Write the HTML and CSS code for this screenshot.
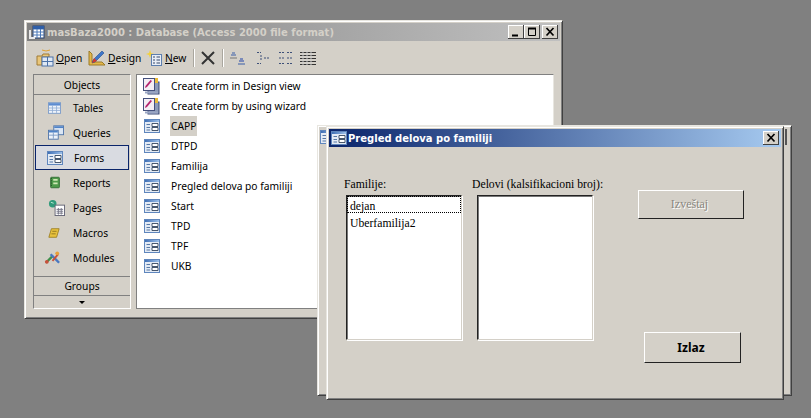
FILE: index.html
```html
<!DOCTYPE html>
<html lang="en">
<head>
	<meta charset="UTF-8">
	<title>masBaza2000</title>
	<link rel="stylesheet" href="styles.css">
</head>
<body>
	<svg class="defs" width="0" height="0">
		<defs>
			<linearGradient id="fbar" x1="0" y1="0" x2="1" y2="0"><stop offset="0" stop-color="#3f6fb5"/><stop offset="1" stop-color="#9cc0ea"/></linearGradient>
			<symbol id="form" viewBox="0 0 16 14">
				<rect x=".5" y=".5" width="15" height="13" fill="#e4ebf5" stroke="#5f86bd"/>
				<rect x="1" y="1" width="14" height="2" fill="url(#fbar)"/>
				<path d="M2.500 5.500h3.500M2.500 8.500h3.500M2.500 11h3.500" stroke="#5577a5" fill="none"/>
				<path d="M8 4.500h6v3h-6zM8 8.500h6v3h-6z" fill="#fff" stroke="#33465f" stroke-width=".9"/>
			</symbol>
			<symbol id="wiz" viewBox="0 0 18 18">
				<rect x="6" y="5" width="11" height="12" fill="#8c9ab8" stroke="#3f4d77"/>
				<rect x="9" y="1" width="7" height="5" fill="#e8b93a"/>
				<rect x="1.500" y="1.500" width="11" height="12" fill="#f4eef4" stroke="#44507c"/>
				<path d="M3 11l2-1 5-6-1.500-1-5 6z" fill="#b5246f"/>
				<path d="M3 15.500h13" stroke="#9aa6c4" stroke-width="2"/>
			</symbol>
		</defs>
	</svg>

	<div class="desktop">
		<!-- database window -->
		<div class="win db">
			<div class="title grey">
				<svg class="tico" width="16" height="16" viewBox="0 0 16 16"><rect x="4" y="2" width="11" height="12" fill="#fff" stroke="#27406f"/><path d="M4 5h11M8 2v12M11.500 2v12M4 8h11M4 11h11" stroke="#4a78b8"/><rect x="4" y="2" width="11" height="3" fill="#2f5fa8"/><path d="M1 6v8h5" fill="none" stroke="#e8e8e8" stroke-width="2"/></svg>
				<span class="ttext">masBaza2000 : Database (Access 2000 file format)</span>
				<div class="ctrls">
					<span class="cbtn"><svg width="14" height="12" viewBox="0 0 14 12"><path d="M3 9.500h6" stroke="#000" stroke-width="2"/></svg></span>
					<span class="cbtn"><svg width="14" height="12" viewBox="0 0 14 12"><path d="M3.500 2.500h7v7h-7z" fill="none" stroke="#000"/><path d="M3 2.500h8" stroke="#000" stroke-width="2"/></svg></span>
					<span class="cbtn gapl"><svg width="14" height="12" viewBox="0 0 14 12"><path d="M3.500 2l7 7.500M10.500 2l-7 7.500" stroke="#000" stroke-width="1.700"/></svg></span>
				</div>
			</div>

			<div class="toolbar">
				<span class="tool t-open">
					<svg width="18" height="18" viewBox="0 0 18 18"><path d="M1 7h5l1-2h6v3h-7v8h-5z" fill="#e9c67a" stroke="#a07a35"/><path d="M6 1l4 1 4-1" stroke="#e0a030" fill="none"/><rect x="6" y="8" width="11" height="9" fill="#dfe8f4" stroke="#4c72a8"/><path d="M11.500 8v9M6 12.500h11" stroke="#4c72a8"/></svg>
					<span><u>O</u>pen</span>
				</span>
				<span class="tool t-design">
					<svg width="18" height="18" viewBox="0 0 18 18"><path d="M1 2v14h16l-3-3H4V5z" fill="#e5b84a" stroke="#9a7a28"/><path d="M5 11l9-9 2 2-9 9-3 1z" fill="#3f76c9" stroke="#234c8c" stroke-width=".6"/><path d="M4 14l2-5 3 3z" fill="#d53a2a"/></svg>
					<span><u>D</u>esign</span>
				</span>
				<span class="tool t-new">
					<svg width="16" height="18" viewBox="0 0 16 18"><path d="M4 1l1 3 3 1-3 1-1 3-1-3-3-1 3-1z" fill="#f3d23c"/><rect x="5.500" y="5.500" width="10" height="11" fill="#e9eef6" stroke="#5d7fae"/><path d="M7 8h2M7 11h2M7 14h2M10.500 8h3.500M10.500 11h3.500M10.500 14h3.500" stroke="#35496a"/></svg>
					<span><u>N</u>ew</span>
				</span>
				<i class="sep"></i>
				<svg class="t-x" width="14" height="14" viewBox="0 0 14 14"><path d="M1 1l12 12M13 1L1 13" stroke="#333" stroke-width="2"/></svg>
				<i class="sep sep2"></i>
				<svg class="t-i1" width="15" height="14" viewBox="0 0 15 14"><path d="M2 2h3M1 4h5" stroke="#3a5fa8"/><path d="M0 7h7" stroke="#777"/><path d="M10 8h3M9 10h5" stroke="#2244aa"/><path d="M8 13h7" stroke="#3a5fa8"/></svg>
				<svg class="t-i2" width="15" height="14" viewBox="0 0 15 14" fill="none" stroke="#3c4f78" stroke-dasharray="2 1"><path d="M1 1.500h4M8 7h6M1 12.500h4M5 4v6"/></svg>
				<svg class="t-i3" width="16" height="14" viewBox="0 0 16 14" fill="none" stroke="#3c4f78" stroke-dasharray="2 1"><path d="M1 1.500h5M9 1.500h6M1 7h5M9 7h6M1 12.500h5M9 12.500h6"/></svg>
				<svg class="t-i4" width="16" height="14" viewBox="0 0 16 14"><path d="M0 1.500h16M0 4.500h16M0 7.500h16M0 10.500h16M0 13.500h16" stroke="#333"/><path d="M3 0v14M7 0v14M11 0v14" stroke="#ccc"/></svg>
			</div>

			<div class="body">
				<div class="bar">
					<div class="bar-head">Objects</div>
					<div class="bar-items">
						<div class="bitem"><svg width="13" height="12" viewBox="0 0 16 14"><rect x=".5" y=".5" width="15" height="13" fill="#eef3fa" stroke="#6f93c6"/><rect x="1" y="1" width="14" height="3" fill="#5d8cd0"/><path d="M1 7h14M1 10h14M5.500 4v9M10.500 4v9" stroke="#8facd4"/></svg><span>Tables</span></div>
						<div class="bitem"><svg width="16" height="15" viewBox="0 0 18 16"><rect x="6.500" y=".5" width="11" height="10" fill="#dbe6f4" stroke="#4c72a8"/><rect x="7" y="1" width="10" height="2" fill="#4f83c8"/><rect x=".5" y="5.500" width="11" height="10" fill="#eef3fa" stroke="#4c72a8"/><rect x="1" y="6" width="10" height="2" fill="#4f83c8"/><path d="M1 11h10M6 8v7" stroke="#7a98c4"/></svg><span>Queries</span></div>
						<div class="bitem on"><svg width="16" height="14"><use href="#form"/></svg><span>Forms</span></div>
						<div class="bitem"><svg width="14" height="13" viewBox="0 0 16 14"><rect x="3" y="1" width="10" height="12" rx="1" fill="#4f9a4a" stroke="#2f6a30"/><path d="M6 3h5v2H6zM6 7h5v2H6z" fill="#cfe7b5"/><path d="M4 2v10" stroke="#1f4a22" stroke-dasharray="1 1"/></svg><span>Reports</span></div>
						<div class="bitem"><svg width="17" height="17" viewBox="0 0 18 18"><circle cx="5" cy="5" r="4" fill="#2f9a7a"/><path d="M3 3.500l3 1" stroke="#bfe8d6"/><rect x="7.500" y="6.500" width="10" height="11" fill="#fff" stroke="#667"/><path d="M9 11h7M9 13h7M9 15h7M11 9.500v7M14 9.500v7" stroke="#778"/></svg><span>Pages</span></div>
						<div class="bitem"><svg width="12" height="12" viewBox="0 0 14 14"><path d="M4 2h9l-3 10H1z" fill="#e8c23e" stroke="#9a7d20"/><path d="M5 5h5M4 8h5" stroke="#8a701c"/></svg><span>Macros</span></div>
						<div class="bitem"><svg class="mods" width="17" height="16" viewBox="0 0 18 16"><path d="M2 13l7-7" stroke="#3f8f4a" stroke-width="2.500"/><path d="M7 4l9 9" stroke="#4a78c0" stroke-width="2.500"/><path d="M9 11l6-7" stroke="#c8503a" stroke-width="2"/><circle cx="3" cy="12" r="2" fill="#c8503a"/><circle cx="14" cy="3" r="2" fill="#e8a03a"/></svg><span>Modules</span></div>
					</div>
					<div class="bar-head grp">Groups</div>
					<div class="bar-more"><i></i></div>
				</div>

				<div class="list">
					<div class="row"><svg class="wz" width="18" height="18"><use href="#wiz"/></svg><span>Create form in Design view</span></div>
					<div class="row"><svg class="wz" width="18" height="18"><use href="#wiz"/></svg><span>Create form by using wizard</span></div>
					<div class="row"><svg width="16" height="14"><use href="#form"/></svg><span class="hl">CAPP</span></div>
					<div class="row"><svg width="16" height="14"><use href="#form"/></svg><span>DTPD</span></div>
					<div class="row"><svg width="16" height="14"><use href="#form"/></svg><span>Familija</span></div>
					<div class="row"><svg width="16" height="14"><use href="#form"/></svg><span>Pregled delova po familiji</span></div>
					<div class="row"><svg width="16" height="14"><use href="#form"/></svg><span>Start</span></div>
					<div class="row"><svg width="16" height="14"><use href="#form"/></svg><span>TPD</span></div>
					<div class="row"><svg width="16" height="14"><use href="#form"/></svg><span>TPF</span></div>
					<div class="row"><svg width="16" height="14"><use href="#form"/></svg><span>UKB</span></div>
				</div>
			</div>
		</div>

		<!-- window hidden behind the form -->
		<div class="win behind">
			<svg class="behind-ico" width="16" height="14"><use href="#form"/></svg>
			<i class="behind-btn"></i>
		</div>

		<!-- form -->
		<div class="win front">
			<div class="title blue">
				<svg class="tico" width="16" height="14"><use href="#form"/></svg>
				<span class="ttext">Pregled delova po familiji</span>
				<div class="ctrls">
					<span class="cbtn"><svg width="14" height="12" viewBox="0 0 14 12"><path d="M3.500 2l7 7.500M10.500 2l-7 7.500" stroke="#000" stroke-width="1.700"/></svg></span>
				</div>
			</div>
			<div class="form">
				<div class="col">
					<label>Familije:</label>
					<div class="lbox">
						<div class="opt sel">dejan</div>
						<div class="opt">Uberfamilija2</div>
					</div>
				</div>
				<div class="col col2">
					<label>Delovi (kalsifikacioni broj):</label>
					<div class="lbox"></div>
				</div>
				<div class="col btns">
					<button class="btn dis" type="button">Izveštaj</button>
					<button class="btn exit" type="button">Izlaz</button>
				</div>
			</div>
		</div>
	</div>
</body>
</html>
```

FILE: styles.css
```css
body {
	margin: 0;
	background: #808080;
	font-family: "Noto Sans", sans-serif;
	font-size: 10.250px;
	color: #000;
}
.defs {
	position: absolute;
}
.desktop {
	position: relative;
	width: 811px;
	height: 418px;
	overflow: hidden;
}
.win {
	position: absolute;
	box-sizing: border-box;
	background: #d4d0c8;
	border: 1px solid;
	border-color: #e8e6e0 #404040 #404040 #e8e6e0;
	box-shadow: inset 1px 1px 0 #fff, inset -1px -1px 0 #808080;
	padding: 2px;
}
.db {
	left: 24px;
	top: 20px;
	width: 539px;
	height: 299px;
}
.behind {
	left: 317px;
	top: 125px;
	width: 475px;
	height: 271px;
}
.behind-ico {
	position: absolute;
	left: 2px;
	top: 4px;
}
.behind-btn {
	position: absolute;
	left: 467px;
	top: 3px;
	width: 2px;
	height: 16px;
	background: #555;
}
.front {
	left: 326px;
	top: 126px;
	width: 458px;
	height: 274px;
	display: flex;
	flex-direction: column;
}
.title {
	display: flex;
	align-items: center;
	height: 18px;
	color: #d4d0c8;
	font-family: "DejaVu Sans", sans-serif;
	font-weight: bold;
	font-size: 10px;
	padding-left: 2px;
	flex: none;
}
.grey {
	background: linear-gradient(to right, #808080, #c0c0c0);
}
.blue {
	background: linear-gradient(to right, #0a246a, #a6caf0);
	color: #fff;
}
.tico {
	margin-right: 2px;
	flex: none;
}
.blue .tico {
	margin-right: 1px;
}
.ttext {
	white-space: nowrap;
}
.ctrls {
	margin-left: auto;
	display: flex;
	padding-right: 2px;
}
.cbtn {
	width: 16px;
	height: 14px;
	background: #d4d0c8;
	box-shadow: inset -1px -1px 0 #404040, inset 1px 1px 0 #fff;
	display: flex;
	align-items: center;
	justify-content: center;
}
.gapl {
	margin-left: 2px;
}
.toolbar {
	display: flex;
	align-items: center;
	height: 33px;
	padding-left: 9px;
}
.tool {
	display: flex;
	align-items: center;
	white-space: nowrap;
}
.tool svg {
	margin-right: 2px;
}
.t-open {
	width: 52px;
}
.t-design {
	width: 58px;
}
.t-new {
	width: 47px;
}
.t-new svg {
	margin-right: 3px;
}
.sep {
	width: 1px;
	height: 18px;
	background: #a9a69e;
	border-right: 1px solid #fff;
}
.t-x {
	margin-left: 6px;
}
.sep2 {
	margin-left: 7px;
}
.t-i1 {
	margin-left: 6px;
}
.t-i2 {
	margin-left: 11px;
}
.t-i3 {
	margin-left: 7px;
}
.t-i4 {
	margin-left: 6px;
}
.body {
	display: flex;
	padding-left: 6px;
	gap: 5px;
}
.bar {
	box-sizing: border-box;
	width: 98px;
	height: 235px;
	border: 1px solid;
	border-color: #808080 #fff #fff #808080;
	display: flex;
	flex-direction: column;
}
.bar-head {
	height: 19px;
	line-height: 20px;
	text-align: center;
	border-bottom: 1px solid #808080;
	flex: none;
}
.bar-items {
	height: 181px;
	flex: none;
}
.bitem {
	height: 25px;
	display: flex;
	align-items: center;
	position: relative;
}
.bitem svg {
	position: absolute;
	left: 14px;
}
.bitem .mods {
	left: 10px;
}
.bitem span {
	margin-left: 39px;
}
.bitem.on {
	margin: 0 1px;
	box-sizing: border-box;
	background: #d9dbe1;
	border: 1px solid #0a246a;
}
.bitem.on svg {
	left: 11px;
}
.bitem.on span {
	margin-left: 38px;
}
.bar-head.grp {
	height: 18px;
	line-height: 18px;
	border-top: 1px solid #808080;
}
.bar-more {
	height: 12px;
	display: flex;
	align-items: center;
	justify-content: center;
}
.bar-more i {
	border: 3px solid transparent;
	border-top-color: #000;
	border-bottom: 0;
}
.list {
	box-sizing: border-box;
	width: 418px;
	height: 235px;
	padding-top: 1px;
	background: #fff;
	border: 1px solid;
	border-color: #808080 #e8e6e0 #808080 #808080;
}
.row {
	height: 20px;
	display: flex;
	align-items: center;
	position: relative;
	padding-left: 33px;
}
.row svg {
	position: absolute;
	left: 7px;
}
.row .wz {
	left: 5px;
}
.row span {
	padding: 0 1px;
	line-height: 20px;
}
.row .hl {
	background: #d4d0c8;
}
.form {
	flex: 1;
	display: flex;
	font-family: "Liberation Serif", serif;
	font-size: 11.700px;
	padding: 30px 0 0 15px;
}
.col {
	display: flex;
	flex-direction: column;
}
.col label {
	height: 16px;
	line-height: 16px;
	white-space: nowrap;
}
.col2 {
	margin-left: 13px;
	width: 130px;
}
.col2 label {
	margin-left: -3px;
}
.lbox {
	box-sizing: border-box;
	width: 116px;
	height: 145px;
	background: #fff;
	border: 1px solid;
	border-color: #222 #d4d0c8 #d4d0c8 #222;
	box-shadow: 1px 1px 0 #fff, inset 1px 1px 0 #777;
	margin: 2px 0 0 2px;
}
.opt {
	height: 17px;
	line-height: 21px;
	padding-left: 3px;
	box-sizing: border-box;
}
.opt.sel {
	border: 1px dotted #000;
	line-height: 19px;
	padding-left: 2px;
}
.btns {
	margin-left: 33px;
	padding-top: 13px;
}
.btn {
	box-sizing: border-box;
	background: #d4d0c8;
	border: 1px solid;
	border-color: #fff #222 #222 #fff;
	font-family: "Liberation Serif", serif;
	font-size: 12px;
	padding: 0 3px 0 0;
}
.btn.dis {
	width: 106px;
	height: 29px;
	color: #8a8780;
	text-shadow: 1px 1px 0 #fff;
}
.btn.exit {
	width: 97px;
	height: 31px;
	margin: 113px 0 0 6px;
	font-family: "Noto Sans", sans-serif;
	font-weight: bold;
	font-size: 12px;
}
```
